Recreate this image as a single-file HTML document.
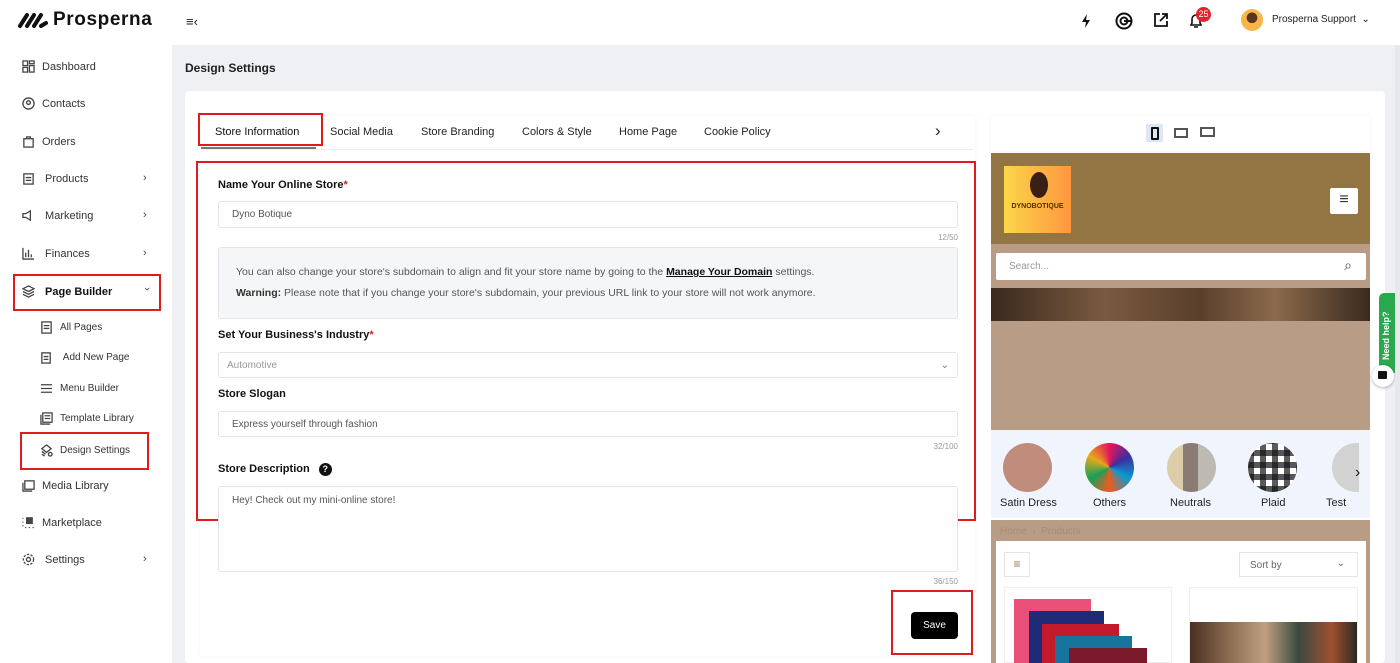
<!DOCTYPE html>
<html><head><meta charset="utf-8"><style>
*{box-sizing:border-box;margin:0;padding:0}
body{width:1400px;height:663px;overflow:hidden;background:#eef0f3;font-family:"Liberation Sans",sans-serif;color:#222;position:relative}
.a{position:absolute}
.side{left:0;top:0;width:172px;height:663px;background:#fff}
.nav{position:absolute;left:22px;font-size:11px;color:#333;display:flex;align-items:center;gap:7px}
.nav svg{width:13px;height:13px;stroke:#444;fill:none;stroke-width:1.4}
.chev{position:absolute;left:143px;font-size:11px;color:#444}
.sub{left:40px;font-size:10px}
.red{position:absolute;border:2px solid #e01b1b}
.top{left:172px;top:0;width:1228px;height:45px;background:#fff}
.lbl{position:absolute;left:218px;font-size:11px;font-weight:bold;color:#111}
.inp{position:absolute;left:218px;width:740px;border:1px solid #e2e4e8;border-radius:3px;background:#fff;font-size:10px;color:#555;padding-left:13px;display:flex;align-items:center}
.cnt{position:absolute;font-size:8px;color:#999;right:442px}
</style></head><body>
<div class="a side">
 <div class="a" style="left:18px;top:9px;font-size:19px;font-weight:bold;color:#111;display:flex;align-items:center;gap:5px">
  <svg width="30" height="18" viewBox="0 0 30 18"><g stroke="#111" stroke-width="4" stroke-linecap="round"><line x1="2" y1="15" x2="9" y2="4"/><line x1="9" y1="15" x2="16" y2="4"/><line x1="16" y1="15" x2="23" y2="4"/><line x1="23" y1="15" x2="28" y2="12"/></g></svg><span style="letter-spacing:0.6px">Prosperna</span></div>
 <div class="nav" style="top:60px"><svg viewBox="0 0 14 14"><rect x="1" y="1" width="5" height="5"/><rect x="8" y="1" width="5" height="3"/><rect x="1" y="8" width="5" height="5"/><rect x="8" y="6" width="5" height="7"/></svg>Dashboard</div>
 <div class="nav" style="top:97px"><svg viewBox="0 0 14 14"><circle cx="7" cy="7" r="6"/><circle cx="7" cy="6" r="2"/></svg>Contacts</div>
 <div class="nav" style="top:135px"><svg viewBox="0 0 14 14"><rect x="2" y="4" width="10" height="9"/><path d="M5 4V2h4v2"/></svg>Orders</div>
 <div class="nav" style="top:172px"><svg viewBox="0 0 14 14"><rect x="2" y="2" width="10" height="11"/><path d="M4 6h6M4 9h6"/></svg>&nbsp;Products</div><div class="chev" style="top:172px">›</div>
 <div class="nav" style="top:209px"><svg viewBox="0 0 14 14"><path d="M1 5h3l5-3v10L4 9H1z"/></svg>&nbsp;Marketing</div><div class="chev" style="top:209px">›</div>
 <div class="nav" style="top:247px"><svg viewBox="0 0 14 14"><path d="M1 1v12h12M4 11V6M7 11V3M10 11V8"/></svg>&nbsp;Finances</div><div class="chev" style="top:247px">›</div>
 <div class="red" style="left:13px;top:274px;width:148px;height:37px"></div>
 <div class="nav" style="top:285px;font-weight:bold;color:#111"><svg viewBox="0 0 14 14"><path d="M7 1l6 3-6 3-6-3zM1 7l6 3 6-3M1 10l6 3 6-3"/></svg>&nbsp;Page Builder</div><div class="chev" style="top:283px;transform:rotate(90deg);left:145px">›</div>
 <div class="nav sub" style="top:321px"><svg viewBox="0 0 14 14"><rect x="2" y="1" width="10" height="12"/><path d="M4 5h6M4 8h6"/></svg>All Pages</div>
 <div class="nav sub" style="top:351px"><svg viewBox="0 0 14 14"><rect x="2" y="2" width="9" height="11"/><path d="M4 6h5M4 9h5"/></svg>&nbsp;Add New Page</div>
 <div class="nav sub" style="top:382px"><svg viewBox="0 0 14 14"><path d="M1 3h12M1 7h12M1 11h12"/></svg>Menu Builder</div>
 <div class="nav sub" style="top:412px"><svg viewBox="0 0 14 14"><rect x="3" y="1" width="10" height="10"/><path d="M1 3v10h10M5 4h6M5 7h6"/></svg>Template Library</div>
 <div class="red" style="left:20px;top:432px;width:129px;height:38px"></div>
 <div class="nav sub" style="top:444px"><svg viewBox="0 0 14 14"><path d="M7 1l5 4-5 4-5-4zM2 8l4 3M2 11l3 2"/><circle cx="11" cy="11" r="2"/></svg>Design Settings</div>
 <div class="nav" style="top:479px"><svg viewBox="0 0 14 14"><rect x="3" y="2" width="10" height="9"/><path d="M1 4v9h10"/></svg>Media Library</div>
 <div class="nav" style="top:516px"><svg viewBox="0 0 14 14"><path d="M1 2v1M1 6v1M1 10v1M4 12v1M8 12v1M12 12v1"/><rect x="5" y="2" width="6" height="6" fill="#444"/></svg>Marketplace</div>
 <div class="nav" style="top:553px"><svg viewBox="0 0 14 14"><circle cx="7" cy="7" r="2.2"/><circle cx="7" cy="7" r="5.5" stroke-dasharray="2.5 1.5"/></svg>&nbsp;Settings</div><div class="chev" style="top:553px">›</div>
</div>
<div class="a top">
 <div class="a" style="left:14px;top:14px;font-size:13px">≡‹</div>
 <svg class="a" style="left:908px;top:13px" width="12" height="16" viewBox="0 0 12 16"><path d="M7 1L2 9h4l-1 6 5-8H6z" fill="#111"/></svg>
 <svg class="a" style="left:943px;top:12px" width="18" height="18" viewBox="0 0 18 18" fill="none" stroke="#111" stroke-width="2"><circle cx="9" cy="9" r="7.5"/><circle cx="9" cy="9" r="3.5"/><path d="M9 9h7"/></svg>
 <svg class="a" style="left:982px;top:13px" width="14" height="14" viewBox="0 0 14 14" fill="none" stroke="#111" stroke-width="1.8"><path d="M6 1H1v12h12V8M8 1h5v5M13 1L6 8"/></svg>
 <svg class="a" style="left:1017px;top:13px" width="14" height="16" viewBox="0 0 14 16" fill="none" stroke="#111" stroke-width="1.6"><path d="M2 12h10l-1-2V6a4 4 0 0 0-8 0v4zM5 14h4"/></svg>
 <div class="a" style="left:1024px;top:7px;width:15px;height:15px;border-radius:50%;background:#e3232b;color:#fff;font-size:9px;text-align:center;line-height:15px">25</div>
 <div class="a" style="left:1069px;top:9px;width:22px;height:22px;border-radius:50%;background:radial-gradient(circle at 50% 40%,#5a3520 30%,#f7b54a 32%)"></div>
 <div class="a" style="left:1100px;top:14px;font-size:10px;color:#222;white-space:nowrap">Prosperna Support &nbsp;⌄</div>
</div>
<div class="a" style="left:185px;top:61px;font-size:12px;font-weight:bold">Design Settings</div>
<div class="a" style="left:185px;top:91px;width:1200px;height:572px;background:#fff;border-radius:4px"></div>
<div class="a" style="left:200px;top:116px;width:775px;height:540px;background:#fff;box-shadow:0 0 4px rgba(0,0,0,.06)"></div>
<div class="a" style="left:201px;top:149px;width:773px;height:1px;background:#eee"></div>
<div class="a" style="left:201px;top:147px;width:115px;height:2px;background:#777"></div>
<div class="a" style="top:126px;font-size:11px;color:#111;left:215px">Store Information</div>
<div class="a" style="top:126px;font-size:11px;left:330px">Social Media</div>
<div class="a" style="top:126px;font-size:11px;left:421px">Store Branding</div>
<div class="a" style="top:126px;font-size:11px;left:522px">Colors &amp; Style</div>
<div class="a" style="top:126px;font-size:11px;left:619px">Home Page</div>
<div class="a" style="top:126px;font-size:11px;left:704px">Cookie Policy</div>
<div class="a" style="top:121px;font-size:17px;left:935px">›</div>
<div class="red" style="left:198px;top:113px;width:125px;height:33px"></div>
<div class="red" style="left:196px;top:161px;width:780px;height:360px"></div>
<div class="lbl" style="top:179px">Name Your Online Store<span style="color:#e01b1b">*</span></div>
<div class="inp" style="top:201px;height:27px">Dyno Botique</div>
<div class="cnt" style="top:233px">12/50</div>
<div class="a" style="left:218px;top:247px;width:740px;height:72px;background:#f5f6f7;border:1px solid #e3e5e8;border-radius:3px;font-size:10.5px;color:#555;padding:14px 0 0 17px;line-height:21px">You can also change your store's subdomain to align and fit your store name by going to the <b style="color:#111;text-decoration:underline">Manage Your Domain</b> settings.<br><b style="color:#333">Warning:</b> Please note that if you change your store's subdomain, your previous URL link to your store will not work anymore.</div>
<div class="lbl" style="top:329px">Set Your Business's Industry<span style="color:#e01b1b">*</span></div>
<div class="inp" style="top:352px;height:26px;color:#999;padding-left:8px">Automotive<span style="position:absolute;right:8px;color:#777">⌄</span></div>
<div class="lbl" style="top:388px">Store Slogan</div>
<div class="inp" style="top:411px;height:26px">Express yourself through fashion</div>
<div class="cnt" style="top:442px">32/100</div>
<div class="lbl" style="top:463px">Store Description <span style="display:inline-block;width:13px;height:13px;border-radius:50%;background:#111;color:#fff;text-align:center;font-size:9px;line-height:13px;margin-left:6px">?</span></div>
<div class="inp" style="top:486px;height:86px;align-items:flex-start;padding-top:8px">Hey! Check out my mini-online store!</div>
<div class="cnt" style="top:577px">36/150</div>
<div class="red" style="left:891px;top:590px;width:82px;height:65px"></div>
<div class="a" style="left:911px;top:612px;width:47px;height:27px;background:#000;border-radius:4px;color:#fff;font-size:10px;text-align:center;line-height:27px">Save</div>
<!-- preview -->
<div class="a" style="left:991px;top:116px;width:379px;height:35px;background:#fff;box-shadow:0 0 4px rgba(0,0,0,.06)"></div>
<div class="a" style="left:1146px;top:124px;width:17px;height:18px;background:#dde6f5;border-radius:2px"></div>
<div class="a" style="left:1151px;top:127px;width:8px;height:13px;border:2px solid #111;border-radius:1px"></div>
<div class="a" style="left:1174px;top:128px;width:14px;height:10px;border:2px solid #555"></div>
<div class="a" style="left:1200px;top:127px;width:15px;height:10px;border:2px solid #555"></div>
<div class="a" style="left:991px;top:153px;width:379px;height:91px;background:#937443"></div>
<div class="a" style="left:1004px;top:166px;width:67px;height:67px;background:linear-gradient(90deg,#fcd64a,#fe9640);font-size:7px;font-weight:bold;color:#5a2a10;text-align:center;padding-top:37px">DYNOBOTIQUE</div>
<div class="a" style="left:1030px;top:172px;width:18px;height:26px;border-radius:50%;background:#3a2014"></div>
<div class="a" style="left:1330px;top:188px;width:28px;height:26px;background:#fff;border-radius:2px;font-size:16px;text-align:center;line-height:24px;color:#333">≡</div>
<div class="a" style="left:991px;top:244px;width:379px;height:186px;background:#b89c85"></div>
<div class="a" style="left:996px;top:253px;width:370px;height:27px;background:#fff;border-radius:2px;font-size:10px;color:#999;padding:8px 0 0 13px">Search...<span style="position:absolute;right:14px;top:4px;color:#444;font-size:14px">⌕</span></div>
<div class="a" style="left:991px;top:288px;width:379px;height:33px;background:linear-gradient(90deg,#3a2a1e,#7a5a40 30%,#5a3f2c 55%,#8b6a4c 75%,#3a2a1e)"></div>
<div class="a" style="left:991px;top:430px;width:379px;height:88px;background:#f0f5fd"></div>
<div class="a" style="left:1003px;top:443px;width:49px;height:49px;border-radius:50%;background:#c08c7c"></div>
<div class="a" style="left:1085px;top:443px;width:49px;height:49px;border-radius:50%;background:conic-gradient(#e3155e,#3b2ea0,#0a9bd0,#f05a1e,#17a058,#e8a81a,#e3155e)"></div>
<div class="a" style="left:1167px;top:443px;width:49px;height:49px;border-radius:50%;background:linear-gradient(90deg,#dccca8 33%,#8a7c74 33%,#8a7c74 63%,#bdbab3 63%)"></div>
<div class="a" style="left:1248px;top:443px;width:49px;height:49px;border-radius:50%;background:repeating-linear-gradient(90deg,rgba(20,20,20,.7) 0 6px,transparent 6px 12px),repeating-linear-gradient(0deg,rgba(20,20,20,.7) 0 6px,#fff 6px 12px)"></div>
<div class="a" style="left:1332px;top:443px;width:27px;height:49px;border-radius:25px 0 0 25px;background:#d2d2d2"></div>
<div class="a" style="left:1355px;top:464px;font-size:16px">›</div>
<div class="a" style="top:497px;font-size:11px;left:1000px">Satin Dress</div>
<div class="a" style="top:497px;font-size:11px;left:1093px">Others</div>
<div class="a" style="top:497px;font-size:11px;left:1170px">Neutrals</div>
<div class="a" style="top:497px;font-size:11px;left:1261px">Plaid</div>
<div class="a" style="top:497px;font-size:11px;left:1326px">Test</div>
<div class="a" style="left:991px;top:520px;width:379px;height:143px;background:#b89c85"></div>
<div class="a" style="left:1000px;top:526px;font-size:10px;color:#a88c78">Home &nbsp;›&nbsp; Products</div>
<div class="a" style="left:996px;top:541px;width:370px;height:122px;background:#fff"></div>
<div class="a" style="left:1004px;top:552px;width:26px;height:25px;border:1px solid #e5e5e5;color:#a07050;text-align:center;font-size:12px;line-height:22px">≡</div>
<div class="a" style="left:1239px;top:552px;width:119px;height:25px;border:1px solid #e5e5e5;font-size:10px;color:#666;padding:7px 0 0 10px">Sort by<span style="position:absolute;right:12px;top:5px">⌄</span></div>
<div class="a" style="left:1004px;top:587px;width:168px;height:76px;border:1px solid #eee"></div>
<div class="a" style="left:1014px;top:599px;width:77px;height:64px;background:#ea4f79"></div>
<div class="a" style="left:1029px;top:611px;width:75px;height:52px;background:#1f2a78"></div>
<div class="a" style="left:1042px;top:624px;width:77px;height:39px;background:#c31b2c"></div>
<div class="a" style="left:1055px;top:636px;width:77px;height:27px;background:#17759d"></div>
<div class="a" style="left:1069px;top:648px;width:78px;height:15px;background:#7a1a2a"></div>
<div class="a" style="left:1189px;top:587px;width:169px;height:76px;border:1px solid #eee"></div>
<div class="a" style="left:1190px;top:622px;width:167px;height:41px;background:linear-gradient(90deg,#4a3020,#8a6a50,#c0a080 45%,#3a4a40 65%,#a05030 85%,#2a2a20)"></div>
<div class="a" style="left:1379px;top:293px;width:21px;height:80px;background:#29a94d;border-radius:5px 0 0 5px"></div>
<div class="a" style="left:1381px;top:360px;color:#fff;font-size:9px;font-weight:bold;transform:rotate(-90deg);transform-origin:left top;white-space:nowrap">Need help?</div>
<div class="a" style="left:1372px;top:365px;width:22px;height:22px;border-radius:50%;background:#fff;box-shadow:0 1px 3px rgba(0,0,0,.3)"></div>
<div class="a" style="left:1378px;top:371px;width:9px;height:8px;background:#111;border-radius:1px"></div>
<div class="a" style="left:1395px;top:45px;width:5px;height:618px;background:#e6e8ec"></div>
</body></html>
